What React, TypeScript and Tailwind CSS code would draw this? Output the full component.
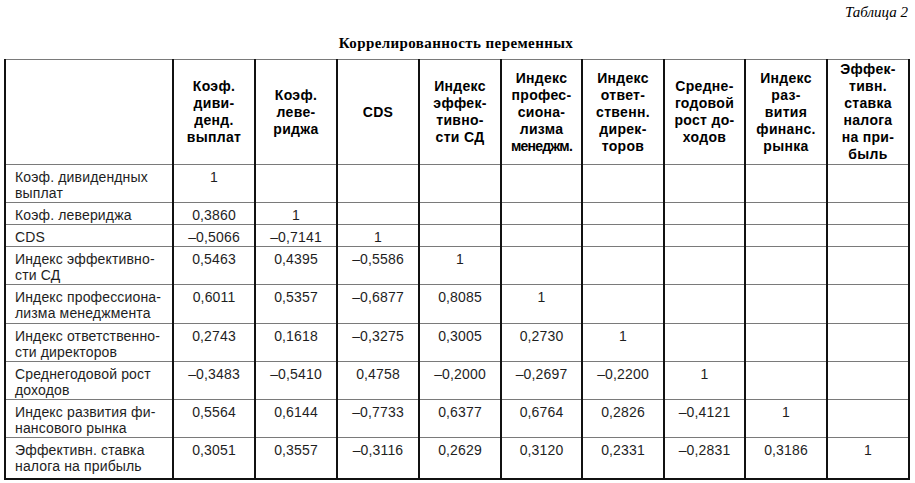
import React from 'react';

const headers: string[][] = [
  ['Коэф.', 'диви-', 'денд.', 'выплат'],
  ['Коэф.', 'леве-', 'риджа'],
  ['CDS'],
  ['Индекс', 'эффек-', 'тивно-', 'сти СД'],
  ['Индекс', 'профес-', 'сиона-', 'лизма', 'менеджм.'],
  ['Индекс', 'ответ-', 'ственн.', 'дирек-', 'торов'],
  ['Средне-', 'годовой', 'рост до-', 'ходов'],
  ['Индекс', 'раз-', 'вития', 'финанс.', 'рынка'],
  ['Эффек-', 'тивн.', 'ставка', 'налога', 'на при-', 'быль'],
];

const rows: { label: string[]; values: string[]; h: number }[] = [
  { label: ['Коэф. дивидендных', 'выплат'], values: ['1'], h: 38 },
  { label: ['Коэф. левериджа'], values: ['0,3860', '1'], h: 22 },
  { label: ['CDS'], values: ['–0,5066', '–0,7141', '1'], h: 22 },
  { label: ['Индекс эффективно-', 'сти СД'], values: ['0,5463', '0,4395', '–0,5586', '1'], h: 38 },
  {
    label: ['Индекс профессиона-', 'лизма менеджмента'],
    values: ['0,6011', '0,5357', '–0,6877', '0,8085', '1'],
    h: 39,
  },
  {
    label: ['Индекс ответственно-', 'сти директоров'],
    values: ['0,2743', '0,1618', '–0,3275', '0,3005', '0,2730', '1'],
    h: 38,
  },
  {
    label: ['Среднегодовой рост', 'доходов'],
    values: ['–0,3483', '–0,5410', '0,4758', '–0,2000', '–0,2697', '–0,2200', '1'],
    h: 38,
  },
  {
    label: ['Индекс развития фи-', 'нансового рынка'],
    values: ['0,5564', '0,6144', '–0,7733', '0,6377', '0,6764', '0,2826', '–0,4121', '1'],
    h: 38,
  },
  {
    label: ['Эффективн. ставка', 'налога на прибыль'],
    values: ['0,3051', '0,3557', '–0,3116', '0,2629', '0,3120', '0,2331', '–0,2831', '0,3186', '1'],
    h: 41,
  },
];

const colWidths = [82, 82, 82, 82, 81, 82, 81, 82, 82];

export default function App() {
  return (
    <div className="w-[915px] h-[483px] overflow-hidden bg-white text-black">
      <div className="pl-[4px] pr-[7px]">
        <p className="h-[24px] pt-[3px] text-right font-['Liberation_Serif',serif] text-[15px] italic leading-[18px]">
          Таблица 2
        </p>
        <h1 className="pt-[10px] pb-[7px] text-center font-['Liberation_Serif',serif] text-[15px] font-bold leading-[18px] tracking-[0.4px]">
          Коррелированность переменных
        </h1>

        <table className="w-[904px] table-fixed border-collapse font-['Liberation_Sans',Arial,sans-serif]">
          <colgroup>
            <col className="w-[168px]" />
            {colWidths.map((w, i) => (
              <col key={i} style={{ width: w }} />
            ))}
          </colgroup>
          <thead>
            <tr className="h-[105px]">
              <th className="border-x-2 border-y border-x-[#111] border-y-[#7a7a7a]" />
              {headers.map((lines, i) => (
                <th
                  key={i}
                  className="border-x-2 border-y border-x-[#111] border-y-[#7a7a7a] p-0 text-center align-middle text-[14px] font-bold leading-[17px] tracking-[0.3px]"
                >
                  {lines.map((l, j) => (
                    <div
                      key={j}
                      className={l === 'менеджм.' ? 'whitespace-nowrap tracking-[-0.8px]' : 'whitespace-nowrap'}
                    >
                      {l}
                    </div>
                  ))}
                </th>
              ))}
            </tr>
          </thead>
          <tbody className="text-[14px] leading-[16px] tracking-[0.15px] text-[#1e1e1e]">
            {rows.map((r, i) => (
              <tr key={i} style={{ height: r.h }}>
                <td
                  className={
                    i === rows.length - 1
                      ? 'border-x-2 border-t border-b-2 border-x-[#111] border-t-[#7a7a7a] border-b-[#111] pl-[9px] pt-[4px] align-top'
                      : 'border-x-2 border-y border-x-[#111] border-y-[#7a7a7a] pl-[9px] pt-[4px] align-top'
                  }
                >
                  {r.label.map((l, j) => (
                    <div key={j} className="whitespace-nowrap">
                      {l}
                    </div>
                  ))}
                </td>
                {colWidths.map((_, c) => (
                  <td
                    key={c}
                    className={
                      i === rows.length - 1
                        ? 'border-x-2 border-t border-b-2 border-x-[#111] border-t-[#7a7a7a] border-b-[#111] pt-[4px] text-center align-top'
                        : 'border-x-2 border-y border-x-[#111] border-y-[#7a7a7a] pt-[4px] text-center align-top'
                    }
                  >
                    {r.values[c] ?? ''}
                  </td>
                ))}
              </tr>
            ))}
          </tbody>
        </table>
      </div>
    </div>
  );
}
